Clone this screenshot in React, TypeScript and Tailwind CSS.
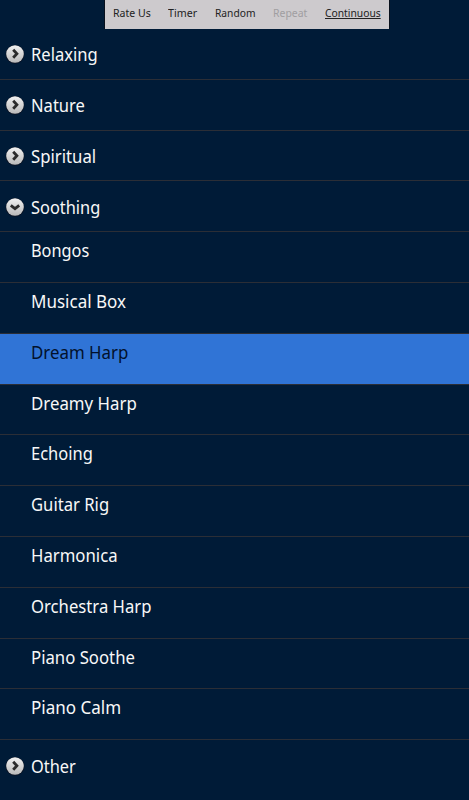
import clsx from "clsx";

type Sound = { title: string; width: string };
type Category = Sound & { open?: boolean; sounds?: Sound[] };

const menu = [
  { text: "Rate Us", className: "w-[38px]", width: "scale-x-[0.96]" },
  { text: "Timer", className: "ml-[17px] w-[30px]", width: "scale-x-[0.97]" },
  { text: "Random", className: "ml-[17px] w-[40px]", width: "scale-x-[0.93]" },
  { text: "Repeat", className: "ml-[18px] w-[35px] text-[#a09ea1]", width: "scale-x-[0.95]" },
  {
    text: "Continuous",
    className: "ml-[17px] w-[56px]",
    width: "scale-x-[0.935] underline underline-offset-1",
  },
];

// Titles are slightly condensed, each by its own factor
const categories: Category[] = [
  { title: "Relaxing", width: "scale-x-[0.92]" },
  { title: "Nature", width: "scale-x-[0.92]" },
  { title: "Spiritual", width: "scale-x-[0.93]" },
  {
    title: "Soothing",
    width: "scale-x-[0.91]",
    open: true,
    sounds: [
      { title: "Bongos", width: "scale-x-[0.905]" },
      { title: "Musical Box", width: "scale-x-[0.945]" },
      { title: "Dream Harp", width: "scale-x-[0.937]" },
      { title: "Dreamy Harp", width: "scale-x-[0.935]" },
      { title: "Echoing", width: "scale-x-[0.915]" },
      { title: "Guitar Rig", width: "scale-x-[0.925]" },
      { title: "Harmonica", width: "scale-x-[0.93]" },
      { title: "Orchestra Harp", width: "scale-x-[0.927]" },
      { title: "Piano Soothe", width: "scale-x-[0.93]" },
      { title: "Piano Calm", width: "scale-x-[0.945]" },
    ],
  },
  { title: "Other", width: "scale-x-[0.91]" },
];

const selected = "Dream Harp";

function Indicator({ open }: { open?: boolean }) {
  return (
    <svg className="ml-[5px] h-5 w-5 shrink-0" viewBox="0 0 20 20">
      <defs>
        <linearGradient id="knob" x1="0" y1="0" x2="0" y2="1">
          <stop offset="0" stopColor="#f2f2f2" />
          <stop offset="1" stopColor="#b9b9b9" />
        </linearGradient>
      </defs>
      <circle cx="10" cy="10.4" r="9.4" fill="#0a1222" />
      <circle cx="10" cy="10" r="8.8" fill="url(#knob)" />
      <path
        d={open ? "M5.8 8.3 L10 11.6 L14.2 8.3" : "M8.2 5.8 L11.9 9.8 L8.2 13.8"}
        fill="none"
        stroke="#2b2b2b"
        strokeWidth="2.8"
      />
    </svg>
  );
}

function CategoryRow({ category }: { category: Category }) {
  return (
    <div className="flex h-[50.8px] items-center border-b border-[#2b2e36] pt-px group-last:border-b-0 group-last:pt-0">
      <Indicator open={category.open} />
      <span className={clsx("ml-[6px] inline-block origin-left whitespace-nowrap", category.width)}>
        {category.title}
      </span>
    </div>
  );
}

function SoundRow({ sound }: { sound: Sound }) {
  return (
    <div
      className={clsx(
        "h-[50.8px] border-b border-[#2b2e36] pt-[5.1px] pl-[31px] whitespace-nowrap",
        sound.title === selected && "bg-[#3074d6] text-[#02112b]"
      )}
    >
      <span className={clsx("inline-block origin-left", sound.width)}>{sound.title}</span>
    </div>
  );
}

function App() {
  return (
    <div className="h-[800px] w-full overflow-hidden bg-[#001b37] font-['Noto_Sans',sans-serif] text-[18px] leading-[26px] text-[#f8f8f8]">
      <div className="ml-[104px] flex h-[29px] w-[286px] items-center border-x border-[#08101c] bg-[#cdcacd] pb-[3px] pl-[8px] text-[11px] leading-4 text-[#222]">
        {menu.map((item) => (
          <span key={item.text} className={clsx("shrink-0 whitespace-nowrap", item.className)}>
            <span className={clsx("inline-block origin-left", item.width)}>{item.text}</span>
          </span>
        ))}
      </div>
      {categories.map((category) => (
        <div key={category.title} className="group">
          <CategoryRow category={category} />
          {category.open && category.sounds?.map((sound) => <SoundRow key={sound.title} sound={sound} />)}
        </div>
      ))}
    </div>
  );
}

export default App;
